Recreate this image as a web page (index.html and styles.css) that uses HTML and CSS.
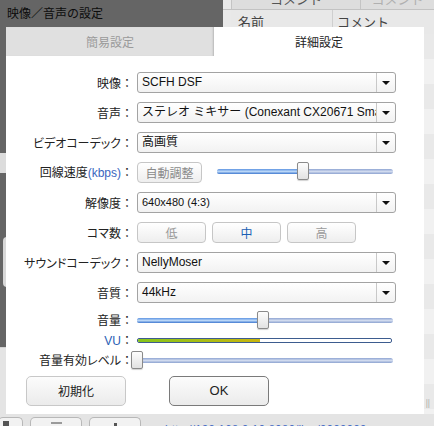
FILE: index.html
```html
<!DOCTYPE html>
<html lang="ja">
<head>
<meta charset="utf-8">
<title>映像／音声の設定</title>
<link rel="stylesheet" href="styles.css">
</head>
<body>
<div class="app">
  <aside class="side">
    <div class="side-dark">
      <div class="title">映像／音声の設定</div>
      <div class="side-strip"></div>
      <div class="side-knob"></div>
    </div>
    <div class="side-light"></div>
  </aside>
  <main class="list">
    <div class="list-head1">
      <div class="lh-gap"></div>
      <div class="lh-cell c1"><span>コメント</span></div>
      <div class="lh-cell c2"><span>コメント</span></div>
    </div>
    <div class="list-head2">
      <div class="lh-gap"></div>
      <div class="lh2-cell n">名前</div>
      <div class="lh2-cell m">コメント</div>
    </div>
    <div class="list-rows"><div class="grip">||</div></div>
  </main>
  <footer class="bottom">
    <div class="bbtn b1"><i></i></div>
    <div class="bbtn b2"><i></i></div>
    <div class="bbtn b3"><i></i></div>
    <div class="url">http://192.168.0.10:8080/live/0000000</div>
  </footer>
</div>

<section class="dialog">
  <div class="tabs">
    <div class="tab">簡易設定</div>
    <div class="tab active">詳細設定</div>
  </div>

  <div class="form">
    <div class="lbl">映像<span class="colon">：</span></div>
    <div class="select"><span>SCFH DSF</span><b><svg width="8" height="4" viewBox="0 0 8 4"><polygon points="0,0 8,0 4,4" fill="#111"/></svg></b></div>

    <div class="lbl">音声<span class="colon">：</span></div>
    <div class="select"><span>ステレオ ミキサー (Conexant CX20671 SmartAudio HD)</span><b><svg width="8" height="4" viewBox="0 0 8 4"><polygon points="0,0 8,0 4,4" fill="#111"/></svg></b></div>

    <div class="lbl">ビデオコーデック<span class="colon">：</span></div>
    <div class="select"><span>高画質</span><b><svg width="8" height="4" viewBox="0 0 8 4"><polygon points="0,0 8,0 4,4" fill="#111"/></svg></b></div>

    <div class="lbl">回線速度<em>(kbps)</em><span class="colon">：</span></div>
    <div class="rate">
      <button class="btn auto">自動調整</button>
      <div class="slider rate-slider">
        <div class="track"><div class="fill" style="width:86px"></div></div>
        <div class="thumb" style="left:80px"></div>
      </div>
    </div>

    <div class="lbl">解像度<span class="colon">：</span></div>
    <div class="select small"><span>640x480 (4:3)</span><b><svg width="8" height="4" viewBox="0 0 8 4"><polygon points="0,0 8,0 4,4" fill="#111"/></svg></b></div>

    <div class="lbl">コマ数<span class="colon">：</span></div>
    <div class="fps">
      <button class="btn seg">低</button>
      <button class="btn seg on">中</button>
      <button class="btn seg">高</button>
    </div>

    <div class="lbl">サウンドコーデック<span class="colon">：</span></div>
    <div class="select"><span>NellyMoser</span><b><svg width="8" height="4" viewBox="0 0 8 4"><polygon points="0,0 8,0 4,4" fill="#111"/></svg></b></div>

    <div class="lbl">音質<span class="colon">：</span></div>
    <div class="select"><span>44kHz</span><b><svg width="8" height="4" viewBox="0 0 8 4"><polygon points="0,0 8,0 4,4" fill="#111"/></svg></b></div>
  </div>

  <div class="levels">
    <div class="lbl">音量<span class="colon">：</span></div>
    <div class="slider">
      <div class="track"><div class="fill" style="width:126px"></div></div>
      <div class="thumb" style="left:120px"></div>
    </div>

    <div class="lbl"><span class="blue">VU</span><span class="colon">：</span></div>
    <div class="vu-wrap"><div class="vu"><div class="vu-fill" style="width:122px"></div></div></div>

    <div class="lbl">音量有効レベル<span class="colon">：</span></div>
    <div class="slider">
      <div class="track"><div class="fill" style="width:0"></div></div>
      <div class="thumb" style="left:-6px"></div>
    </div>
  </div>

  <div class="actions">
    <button class="btn big">初期化</button>
    <button class="btn big ok">OK</button>
  </div>
</section>
</body>
</html>
```

FILE: styles.css
```css
* { box-sizing: border-box; }
html, body { margin: 0; padding: 0; }
body {
  width: 434px;
  height: 426px;
  overflow: hidden;
  position: relative;
  font-family: "Noto Sans CJK JP", "Noto Sans", sans-serif;
  font-size: 12px;
  color: #222;
  background: #e6e6e6;
}

/* background application */
.app {
  display: grid;
  grid-template-columns: 223px 1fr;
  grid-template-rows: 414px 12px;
  height: 426px;
}
.side { display: flex; flex-direction: column; }
.side-dark {
  height: 347px;
  background: #656565;
  display: flex;
  flex-direction: column;
}
.title {
  height: 27px;
  padding: 5px 0 0 7px;
  line-height: 16px;
  font-size: 12px;
  color: #0c0c0c;
}
.side-strip { margin-top: 126px; height: 20px; background: #dcdcdc; }
.side-knob {
  margin: 64px 0 0 3px;
  width: 20px;
  height: 50px;
  background: #d8d8d8;
  border-radius: 4px;
}
.side-light {
  flex: 1;
  background: #e4e4e4;
  border-top: 1px solid #d2d2d2;
}

.list { display: flex; flex-direction: column; background: #e9e9e9; }
.list-head1 {
  height: 10px;
  display: grid;
  grid-template-columns: 8px 129px 1fr;
  background: #dddddd;
  border-bottom: 1px solid #c2c2c2;
  overflow: hidden;
}
.lh-gap { background: #e9e9e9; }
.lh-cell {
  border-left: 1px solid #c4c4c4;
  text-align: center;
  font-size: 13px;
  line-height: 16px;
  color: #555;
  overflow: hidden;
}
.lh-cell span { display: block; margin-top: -9px; }
.lh-cell.c2 { color: #b0b0b0; }
.list-head2 {
  height: 24px;
  display: grid;
  grid-template-columns: 8px 101px 1fr;
  background: #e8e8e8;
}
.lh2-cell {
  padding: 4px 0 0 7px;
  font-size: 13px;
  line-height: 16px;
  color: #444;
}
.lh2-cell.m { border-left: 1px solid #cfcfcf; padding-left: 4px; }
.list-rows {
  flex: 1;
  display: flex;
  align-items: flex-end;
  justify-content: flex-end;
  padding: 0 4px 6px 0;
  background: repeating-linear-gradient(#e9e9e9 0 25px, #f1f1f1 25px 50px);
}
.grip { font-size: 8px; color: #999; line-height: 10px; }

.bottom {
  grid-column: 1 / -1;
  display: flex;
  align-items: flex-start;
  gap: 7px;
  padding-top: 3px;
  background: #e4e4e4;
  overflow: hidden;
}
.bbtn {
  height: 14px;
  border: 1px solid #b8b8b8;
  border-bottom: none;
  border-radius: 5px 5px 0 0;
  background: #f2f2f2;
  display: flex;
  justify-content: center;
  padding-top: 3px;
}
.bbtn i { display: block; }
.b1 { width: 25px; margin-left: -2px; justify-content: flex-start; padding-left: 4px; }
.b1 i { width: 6px; height: 8px; background: #555; }
.b2 { width: 52px; }
.b2 i { width: 11px; height: 2px; background: #9a9a9a; margin-top: 1px; }
.b3 { width: 52px; }
.b3 i { width: 3px; height: 8px; background: #555; margin-top: 2px; }
.url {
  margin: 6px 0 0 17px;
  font-family: "Liberation Sans", sans-serif;
  font-size: 12px;
  line-height: 14px;
  color: #4a6fc6;
  white-space: nowrap;
}

/* dialog */
.dialog {
  position: absolute;
  left: 6px;
  top: 27px;
  width: 418px;
  height: 387px;
  background: #fff;
}
.tabs {
  display: grid;
  grid-template-columns: 208px 1fr;
  height: 29px;
}
.tab {
  display: flex;
  align-items: center;
  justify-content: center;
  font-size: 12px;
  color: #222;
  background: #fff;
}
.tab:first-child {
  background: #e0e0e0;
  color: #9a9a9a;
  box-shadow: inset -2px 0 2px -1px #b8b8b8;
}

.form {
  display: grid;
  grid-template-columns: 125px 259px;
  column-gap: 6px;
  row-gap: 9px;
  grid-auto-rows: 21px;
  padding-top: 16px;
}
.lbl {
  text-align: right;
  align-self: center;
  line-height: 16px;
  white-space: nowrap;
  font-feature-settings: "palt";
  color: #222;
}
.lbl .colon { font-feature-settings: normal; margin-right: -2px; }
.lbl em {
  font-style: normal;
  color: #3a66c0;
  font-family: "Liberation Sans", sans-serif;
  font-size: 12px;
}
.blue { color: #2b5fb5; font-family: "Liberation Sans", sans-serif; }

.select {
  display: flex;
  border: 1px solid #a3a3a3;
  border-radius: 3px;
  background: linear-gradient(#ffffff, #f2f2f2);
  overflow: hidden;
}
.select span {
  flex: 1;
  min-width: 0;
  padding-left: 4px;
  font-family: "Liberation Sans", "Noto Sans CJK JP", sans-serif;
  font-size: 12px;
  line-height: 19px;
  white-space: nowrap;
  overflow: hidden;
  color: #111;
}
.select.small span { font-size: 11px; }
.select b {
  width: 19px;
  flex: none;
  border-left: 1px solid #c8c8c8;
  display: flex;
  align-items: center;
  justify-content: center;
}

.btn {
  font-family: "Noto Sans CJK JP", sans-serif;
  font-size: 12px;
  margin: 0;
  padding: 0;
  border: 1px solid #c6c6c6;
  border-radius: 4px;
  background: linear-gradient(#ffffff, #eeeeee);
  color: #8a8a8a;
  line-height: 16px;
}
.rate { display: flex; align-items: flex-start; gap: 15px; }
.btn.auto { width: 65px; height: 21px; }
.fps { display: flex; gap: 6px; }
.btn.seg { width: 69px; height: 21px; color: #9a9a9a; }
.btn.seg.on { color: #1a5fb4; }

.slider {
  position: relative;
  display: flex;
  align-items: center;
  height: 20px;
  width: 256px;
}
.rate-slider { width: 176px; margin-top: -1px; }
.track {
  flex: 1;
  height: 5px;
  border-radius: 3px;
  background: linear-gradient(#8fa5d3, #d0daee 50%, #8ca2d0);
  overflow: hidden;
}
.fill {
  height: 100%;
  background: linear-gradient(#5f95e2, #b9d6f7 50%, #3f78cf);
}
.thumb {
  position: absolute;
  top: 1px;
  width: 12px;
  height: 18px;
  border: 1px solid #8a8a8a;
  border-radius: 2px;
  background: linear-gradient(#fdfdfd, #e2e2e2);
  box-shadow: 0 1px 1px rgba(0,0,0,0.18);
}

.levels {
  display: grid;
  grid-template-columns: 125px 256px;
  column-gap: 6px;
  grid-auto-rows: 20px;
  margin-top: 7px;
}
.vu-wrap { display: flex; align-items: center; }
.vu {
  width: 255px;
  height: 5px;
  border: 1px solid #3d5c8f;
  border-radius: 2px;
  background: #fff;
  overflow: hidden;
}
.vu-fill {
  height: 100%;
  background: linear-gradient(to right, #86c51a, #c9b60e);
}

.actions {
  display: flex;
  gap: 43px;
  padding-left: 20px;
  margin-top: 6px;
}
.btn.big {
  width: 100px;
  height: 30px;
  border-radius: 5px;
  font-size: 12px;
  color: #222;
  border-color: #c8c8c8;
  background: linear-gradient(#fcfcfc, #ebebeb);
}
.btn.big.ok {
  border-color: #7a7a7a;
  font-family: "Liberation Sans", sans-serif;
  font-size: 13px;
}
```
